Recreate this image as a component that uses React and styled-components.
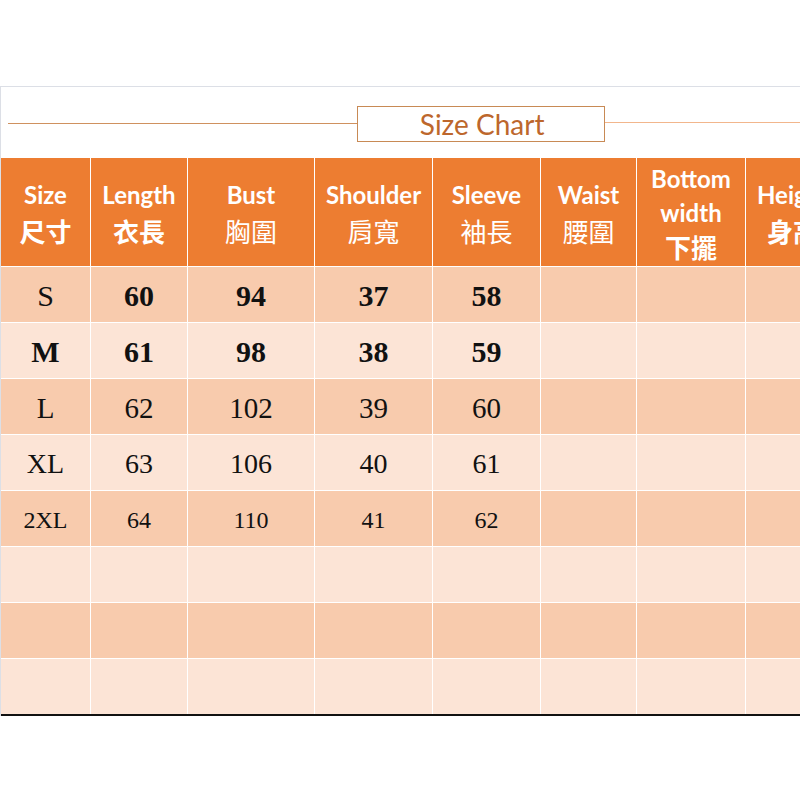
import React from "react";
import styled, { createGlobalStyle } from "styled-components";

const Global = createGlobalStyle`
  html, body { margin: 0; padding: 0; background: #fff; }
  body { overflow: hidden; width: 800px; height: 800px; }
`;

const Frame = styled.div`
  margin-top: 86px;
  border-top: 1px solid #dcdfe6;
  border-left: 1px solid #dcdfe6;
  width: 900px;
`;

const TitleBar = styled.div`
  height: 71px;
  display: flex;
  align-items: center;
  padding-left: 7px;
`;

const Rule = styled.div`
  height: 1px;
  width: ${(p) => p.$w}px;
  background: ${(p) => p.$c};
  margin-top: ${(p) => p.$dy || 0}px;
`;

const TitleBox = styled.div`
  box-sizing: border-box;
  width: 251px;
  height: 36px;
  margin-top: 2px;
  border: 1px solid #c88a55;
  display: flex;
  align-items: center;
  justify-content: center;
  font-family: "Lato", "Noto Sans", sans-serif;
  font-size: 28px;
  color: #bd672c;
  padding-left: 2px;
`;

const Grid = styled.div`
  display: grid;
  grid-template-columns: 89px 96px 126px 117px 107px 95px 108px 94px;
  grid-template-rows: 108px repeat(8, 55px);
  gap: 1px;
  background: #fff;
  border-bottom: 2px solid #111;
  width: 839px;
`;

const Head = styled.div`
  background: #ed7d31;
  color: #fff;
  display: flex;
  flex-direction: column;
  align-items: center;
  justify-content: center;
  text-align: center;
  line-height: ${(p) => (p.$tight ? 34 : 36)}px;
  padding-top: 2px;
  white-space: nowrap;
`;

const En = styled.span`
  font-family: "Lato", "Noto Sans", sans-serif;
  font-weight: 700;
  font-size: 24px;
`;

const Zh = styled.span`
  font-family: "Noto Sans CJK TC", "Noto Sans", sans-serif;
  font-weight: ${(p) => (p.$bold ? 700 : 400)};
  font-size: 26px;
`;

const Cell = styled.div`
  background: ${(p) => (p.$odd ? "#f8cbad" : "#fce4d6")};
  display: flex;
  align-items: center;
  justify-content: center;
  padding-top: 3px;
  font-family: "Liberation Serif", "Times New Roman", serif;
  color: #111;
  font-size: ${(p) => p.$size}px;
  font-weight: ${(p) => (p.$bold ? 700 : 400)};
`;

const headers = [
  { en: ["Size"], zh: "尺寸", bold: true },
  { en: ["Length"], zh: "衣長", bold: true },
  { en: ["Bust"], zh: "胸圍" },
  { en: ["Shoulder"], zh: "肩寬" },
  { en: ["Sleeve"], zh: "袖長" },
  { en: ["Waist"], zh: "腰圍" },
  { en: ["Bottom", "width"], zh: "下擺", bold: true },
  { en: ["Height"], zh: "身高", bold: true },
];

const rows = [
  { v: ["S", "60", "94", "37", "58"], size: 30, bold: [false, true, true, true, true] },
  { v: ["M", "61", "98", "38", "59"], size: 30, bold: [true, true, true, true, true] },
  { v: ["L", "62", "102", "39", "60"], size: 29 },
  { v: ["XL", "63", "106", "40", "61"], size: 28 },
  { v: ["2XL", "64", "110", "41", "62"], size: 24 },
  { v: [] },
  { v: [] },
  { v: [] },
];

export default function App() {
  return (
    <>
      <Global />
      <Frame>
        <TitleBar>
          <Rule $w={354} $c="#cf915f" $dy={2} />
          <TitleBox>Size Chart</TitleBox>
          <Rule $w={300} $c="#f2b68c" />
        </TitleBar>
        <Grid>
          {headers.map((h, i) => (
            <Head key={i} $tight={h.en.length > 1}>
              {h.en.map((t) => (
                <En key={t}>{t}</En>
              ))}
              <Zh $bold={h.bold}>{h.zh}</Zh>
            </Head>
          ))}
          {rows.map((r, ri) =>
            headers.map((_, ci) => (
              <Cell
                key={`${ri}-${ci}`}
                $odd={ri % 2 === 0}
                $size={r.size || 26}
                $bold={r.bold ? r.bold[ci] : false}
              >
                {r.v[ci] || ""}
              </Cell>
            ))
          )}
        </Grid>
      </Frame>
    </>
  );
}
